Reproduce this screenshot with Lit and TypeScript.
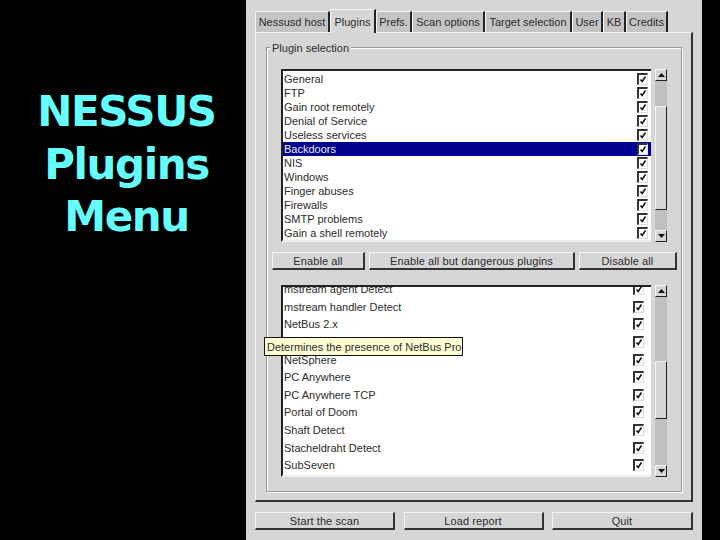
import { LitElement, html, css } from "lit";
import { customElement } from "lit/decorators.js";

const tabs: [string, number][] = [["Nessusd host", 75], ["Plugins", 46], ["Prefs.", 36], ["Scan options", 73], ["Target selection", 87], ["User", 31], ["KB", 23], ["Credits", 42]];
const families = ["General", "FTP", "Gain root remotely", "Denial of Service", "Useless services", "Backdoors", "NIS", "Windows", "Finger abuses", "Firewalls", "SMTP problems", "Gain a shell remotely"];
const plugins = ["mstream agent Detect", "mstream handler Detect", "NetBus 2.x", "NetBus Pro", "NetSphere", "PC Anywhere", "PC Anywhere TCP", "Portal of Doom", "Shaft Detect", "Stacheldraht Detect", "SubSeven"];

@customElement("app-root")
export class AppRoot extends LitElement {
  static styles = css`
    :host { display: block; width: 720px; height: 540px; background: #000; overflow: hidden; font-family: "Liberation Sans", Arial, sans-serif; font-size: 11px; color: #2c2c2c; }
    * { box-sizing: border-box; }
    .page { display: flex; height: 540px; }
    .title { width: 246px; padding: 86px 0 0 7px; text-align: center; color: #66ffff; font: bold 42px/52.5px "DejaVu Sans", Verdana, sans-serif; letter-spacing: -1.4px; }
    .win { width: 456px; background: #d6d6d6; padding: 10px 9px 10px; display: flex; flex-direction: column; position: relative; }
    .tabs { display: flex; height: 22px; align-items: flex-end; position: relative; z-index: 1; }
    .tab { height: 21px; flex: none; background: #c4c4c4; border-top: 1px solid #f4f4f4; border-left: 1px solid #f4f4f4; border-right: 2px solid #222; display: flex; align-items: center; justify-content: center; white-space: nowrap; }
    .tab.on { height: 24px; margin-bottom: -1px; background: #d6d6d6; }
    .note { height: 470px; border: 1px solid #f4f4f4; border-right: 2px solid #333; border-bottom: 2px solid #333; padding: 14px 9px 9px 10px; }
    .group { height: 445px; border: 1px solid #999; box-shadow: inset 1px 1px 0 #fff, 1px 1px 0 #fff; padding: 21px 14px 0 14px; position: relative; }
    .legend { position: absolute; top: -6px; left: 3px; background: #d6d6d6; padding: 0 2px; line-height: 13px; }
    .listrow { display: flex; justify-content: space-between; }
    .list { width: 370px; background: #fff; border-top: 2px solid #222; border-left: 2px solid #222; border-bottom: 2px solid #eee; overflow: hidden; }
    .l1 { height: 173px; padding-top: 1px; }
    .l2 { height: 192px; }
    .l2 .inner { margin-top: -6.5px; }
    .row { display: flex; justify-content: space-between; align-items: center; padding: 0 3px 0 1px; white-space: nowrap; }
    .l1 .row { height: 14px; }
    .l2 .row { height: 17.6px; padding-right: 7px; }
    .row.sel { background: #000090; color: #eee; }
    .cb { width: 11px; height: 12px; border-top: 2px solid #333; border-left: 2px solid #333; border-right: 1px solid #ddd; border-bottom: 1px solid #ddd; background: #fff; flex: none; display: block; }
    .cb svg { display: block; }
    .sb { width: 12px; display: flex; flex-direction: column; background: #c0c0c0; }
    .sb .btn { height: 12px; flex: none; background: #d6d6d6; border-top: 1px solid #f4f4f4; border-left: 1px solid #f4f4f4; border-right: 1px solid #222; border-bottom: 1px solid #222; display: flex; align-items: center; justify-content: center; }
    .sb .thumb { background: #d6d6d6; border-left: 1px solid #f4f4f4; border-top: 1px solid #f4f4f4; border-right: 1px solid #222; border-bottom: 1px solid #222; flex: none; }
    .sb .gap { flex: 1; }
    .bar { display: flex; gap: 4px; padding: 10px 0 15px; margin: 0 -10px 0 -9px; }
    .b { height: 18px; flex: none; background: #d6d6d6; border-top: 1px solid #f4f4f4; border-left: 1px solid #f4f4f4; border-right: 2px solid #333; border-bottom: 2px solid #333; display: flex; align-items: center; justify-content: center; letter-spacing: .1px; white-space: nowrap; }
    .foot { display: flex; justify-content: space-between; margin-top: 10px; }
    .foot .b { width: 140px; }
    .foot .b:last-child { width: 141px; }
    .tip { position: absolute; left: 18px; top: 337px; width: 199px; height: 19px; background: #ffffd4; border: 1px solid #111; display: flex; align-items: center; padding-left: 2px; white-space: nowrap; color: #2c2c2c; }
  `;

  private check() {
    return html`<span class="cb"><svg width="8" height="9" viewBox="0 0 8 9"><path d="M1.5 4.5 L3.2 6.5 L6.5 1.5" fill="none" stroke="#111" stroke-width="1.5"/></svg></span>`;
  }

  private scrollbar(before: number, thumb: number) {
    return html`<div class="sb">
      <div class="btn"><svg width="7" height="4" viewBox="0 0 7 4"><path d="M3.5 0L7 4H0z" fill="#111"/></svg></div>
      <div style="height:${before}px"></div>
      <div class="thumb" style="height:${thumb}px"></div>
      <div class="gap"></div>
      <div class="btn"><svg width="7" height="4" viewBox="0 0 7 4"><path d="M0 0H7L3.5 4z" fill="#111"/></svg></div>
    </div>`;
  }

  render() {
    return html`<div class="page">
      <div class="title">NESSUS<br />Plugins<br />Menu</div>
      <div class="win">
        <div class="tabs">
          ${tabs.map(([t, w]) => html`<div class="tab ${t === "Plugins" ? "on" : ""}" style="width:${w}px">${t}</div>`)}
        </div>
        <div class="note">
          <div class="group">
            <div class="legend">Plugin selection</div>
            <div class="listrow">
              <div class="list l1">
                ${families.map((f) => html`<div class="row ${f === "Backdoors" ? "sel" : ""}"><span>${f}</span>${this.check()}</div>`)}
              </div>
              ${this.scrollbar(25, 104)}
            </div>
            <div class="bar">
              <div class="b" style="width:93px">Enable all</div>
              <div class="b" style="width:206px">Enable all but dangerous plugins</div>
              <div class="b" style="width:98px">Disable all</div>
            </div>
            <div class="listrow">
              <div class="list l2">
                <div class="inner">
                  ${plugins.map((p) => html`<div class="row"><span>${p}</span>${this.check()}</div>`)}
                </div>
              </div>
              ${this.scrollbar(64, 58)}
            </div>
          </div>
        </div>
        <div class="foot">
          <div class="b">Start the scan</div>
          <div class="b">Load report</div>
          <div class="b">Quit</div>
        </div>
        <div class="tip">Determines the presence of NetBus Pro</div>
      </div>
    </div>`;
  }
}
